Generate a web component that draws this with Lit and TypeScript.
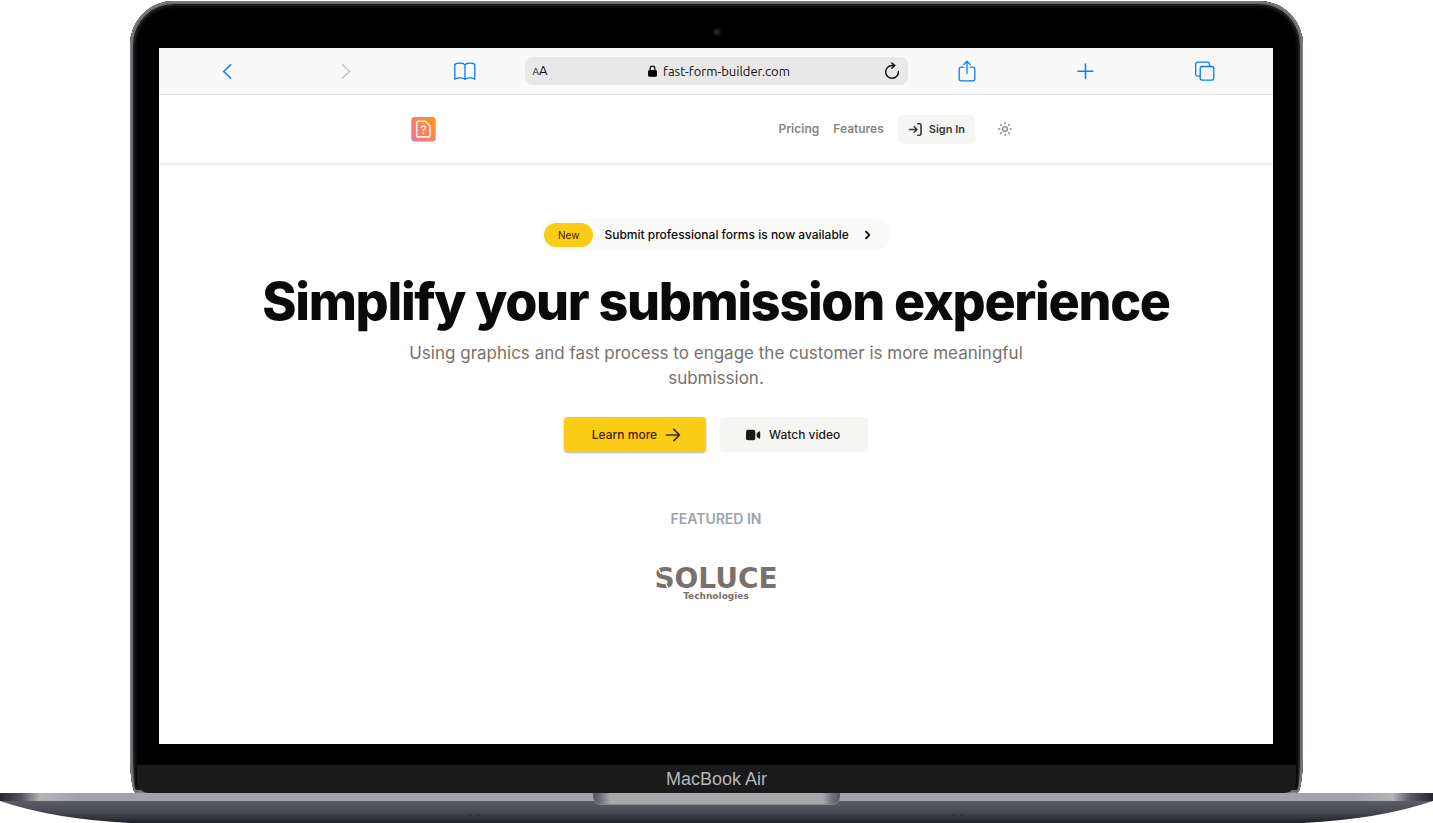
import { LitElement, html, css } from "lit";
import { customElement } from "lit/decorators.js";

@customElement("browser-toolbar")
class BrowserToolbar extends LitElement {
  static styles = css`
    :host {
      display: block;
      background: #f9f9f9;
      border-bottom: 1px solid #e2e2e2;
    }
    .bar {
      display: grid;
      grid-template-columns: repeat(3, 1fr) minmax(200px, 383px) repeat(3, 1fr);
      align-items: center;
      height: 46px;
      padding: 0 9px;
    }
    button {
      display: flex;
      padding: 0;
      border: 0;
      background: none;
      color: #087aff;
      justify-self: center;
    }
    button:disabled {
      color: #c5c5c5;
    }
    svg {
      display: block;
      fill: none;
      stroke: currentColor;
    }
    .address {
      display: flex;
      align-items: center;
      justify-content: space-between;
      height: 28px;
      padding: 0 7px 0 8px;
      border-radius: 8px;
      background: #e8e8e8;
      font: 13px/20px Ubuntu, "Noto Sans", sans-serif;
      color: #111;
    }
    .address button {
      color: #111;
      font: inherit;
      align-items: baseline;
    }
    .small {
      font-size: 10px;
    }
    .url {
      display: flex;
      align-items: center;
      gap: 6px;
      padding-left: 6px;
    }
    .url svg {
      fill: #000;
    }
  `;

  render() {
    return html`<div class="bar">
      <button aria-label="Back">
        <svg width="12" height="18" viewBox="0 0 12 18" stroke-width="1.5"><path d="M10.2 2.300 2.700 9.500l7.500 7" /></svg>
      </button>
      <button aria-label="Forward" disabled>
        <svg width="12" height="18" viewBox="0 0 12 18" stroke-width="1.5"><path d="m2 2.300 7.500 7.200-7.500 7" /></svg>
      </button>
      <button aria-label="Bookmarks">
        <svg width="22" height="18" viewBox="0 0 22 18" stroke-width="1.3" stroke-linejoin="round">
          <path d="M11 2.900C9.500.7 3.300.6.8 2.400v14.800c2.600-1.500 8.200-1.800 10.200.1 2-1.900 7.200-1.600 9.800-.1V2.400C18.300.6 12.500.7 11 2.900Zm0 0v14.300" />
        </svg>
      </button>
      <div class="address">
        <button aria-label="Text size"><span class="small">A</span>A</button>
        <span class="url">
          <svg width="9" height="12" viewBox="0 0 9 12">
            <rect x=".5" y="5.500" width="8" height="5.800" rx=".6" />
            <path d="M2.200 5.500V3.500a2.300 2.300 0 0 1 4.600 0v2" fill="none" stroke-width="1.300" />
          </svg>
          fast-form-builder.com
        </span>
        <button aria-label="Reload">
          <svg width="16" height="18" viewBox="0 0 16 18" stroke-width="1.400" stroke-linecap="round" stroke-linejoin="round">
            <path d="M14.400 9.500A6.400 6.400 0 1 1 8 3.500h2.500M7.800.9l3 2.700-3 2.700" />
          </svg>
        </button>
      </div>
      <button aria-label="Share">
        <svg width="18" height="22" viewBox="0 0 18 22" stroke-width="1.300" stroke-linecap="round" stroke-linejoin="round">
          <path d="M5.800 7.200H3.200Q1.200 7.200 1.200 9.200v9.600q0 2 2 2h11.600q2 0 2-2V9.200q0-2-2-2h-2.600M9 13.500V1.400M5.700 4.600 9 1.300l3.300 3.300" />
        </svg>
      </button>
      <button aria-label="New tab">
        <svg width="18" height="18" viewBox="0 0 18 18" stroke-width="1.500"><path d="M8.500 1.500v15.500M.5 9.300h16" /></svg>
      </button>
      <button aria-label="Tabs">
        <svg width="20" height="20" viewBox="0 0 20 20" stroke-width="1.300">
          <rect x="5.200" y="5.500" width="13.600" height="13.600" rx="2" />
          <path d="M5 15.200H2.800q-2.100 0-2.100-2.200V3.300Q.7 1.200 2.800 1.200h9.500q2.100 0 2.200 2.100v2" />
        </svg>
      </button>
    </div>`;
  }
}

@customElement("site-header")
class SiteHeader extends LitElement {
  static styles = css`
    :host {
      display: block;
      border-bottom: 1px solid #e7e6e5;
      box-shadow: 0 1px 2px rgb(0 0 0 / 8%);
    }
    .inner {
      display: flex;
      align-items: center;
      justify-content: space-between;
      max-width: 610px;
      height: 68px;
      margin: 0 auto;
      font: 500 12px/18px Inter, sans-serif;
    }
    svg {
      display: block;
      fill: none;
      stroke: currentColor;
      stroke-linecap: round;
      stroke-linejoin: round;
    }
    nav {
      display: flex;
      align-items: center;
      gap: 14px;
    }
    a {
      color: #8b8581;
      text-decoration: none;
      font-weight: 600;
    }
    button {
      display: flex;
      align-items: center;
      justify-content: center;
      border: 0;
      font: inherit;
      background: none;
    }
    .signin {
      gap: 6px;
      height: 28px;
      padding: 0 10px;
      border-radius: 5px;
      background: #f5f5f4;
      box-shadow: 0 1px 2px rgb(0 0 0 / 4%);
      color: #3b3735;
      font-size: 11px;
      font-weight: 600;
    }
    .theme {
      width: 32px;
      height: 28px;
      padding: 0;
      color: #8b8581;
    }
  `;

  render() {
    return html`<header class="inner">
      <a href="#" aria-label="Home">
        <svg width="25" height="25" viewBox="0 0 25 25">
          <defs>
            <linearGradient id="brand" x1="0" y1="1" x2="1" y2="0">
              <stop offset="0" stop-color="#f472a0" />
              <stop offset=".5" stop-color="#fb8060" />
              <stop offset="1" stop-color="#ff9a0a" />
            </linearGradient>
          </defs>
          <rect x=".3" y="0" width="24.400" height="24.400" rx="3" fill="url(#brand)" stroke="none" />
          <path d="M7.500 4.300h6.800l4.700 4.600v9q0 2-2 2H7.700q-2 0-2-2V6.100q0-1.800 1.800-1.800Z" stroke="#fff2df" stroke-width="1.600" />
          <path d="M10.300 10.500q.4-1.500 2.200-1.500 2 .1 2 1.700 0 1.500-2.100 2.200v.6M12.400 16.200v.1" stroke="#ffe6d0" stroke-width="1.700" />
        </svg>
      </a>
      <nav>
        <a href="#pricing">Pricing</a>
        <a href="#features">Features</a>
        <button class="signin">
          <svg width="15" height="15" viewBox="0 0 15 15" stroke-width="1.600">
            <path d="M1.500 7.500h7.500M6.200 4.700 9 7.500l-2.800 2.800M9.800 1.800h1.700q1.500 0 1.500 1.500v8.400q0 1.500-1.500 1.500H9.800" />
          </svg>
          Sign In
        </button>
        <button class="theme" aria-label="Toggle theme">
          <svg width="14" height="14" viewBox="0 0 14 14" stroke-width="1.400">
            <circle cx="7" cy="7" r="2.400" />
            <path d="M7 .8v1M7 12.200v1M.8 7h1M12.200 7h1M2.600 2.600l.7.7M10.700 10.700l.7.7M2.600 11.400l.7-.7M10.700 3.300l.7-.7" />
          </svg>
        </button>
      </nav>
    </header>`;
  }
}

@customElement("landing-hero")
class LandingHero extends LitElement {
  static styles = css`
    :host {
      display: block;
      font: 500 12px/18px Inter, sans-serif;
      color: #0c0a09;
    }
    .hero {
      display: flex;
      flex-direction: column;
      align-items: center;
      padding: 55px 16px 0;
      text-align: center;
    }
    svg {
      display: block;
    }
    .line {
      fill: none;
      stroke: currentColor;
      stroke-linecap: round;
      stroke-linejoin: round;
    }
    .news {
      display: flex;
      align-items: center;
      height: 32px;
      padding: 0 19px 0 3px;
      border-radius: 16px;
      background: #fafaf9;
      color: inherit;
      text-decoration: none;
    }
    .tag {
      padding: 3px 14px;
      border-radius: 12px;
      background: #facc15;
      color: #422006;
      font-size: 10px;
      font-weight: 400;
      margin-right: 11px;
    }
    .news svg {
      margin-left: 14px;
    }
    h1 {
      margin: 23px 0 0;
      font-size: 52px;
      line-height: 56px;
      font-weight: 800;
      letter-spacing: -0.025em;
    }
    .lead {
      max-width: 640px;
      margin: 11px 0 0;
      font-size: 17px;
      line-height: 25px;
      font-weight: 400;
      color: #78716c;
    }
    .actions {
      display: flex;
      gap: 14px;
      margin-top: 26px;
    }
    button {
      display: flex;
      align-items: center;
      gap: 8px;
      height: 35px;
      padding: 0 28px;
      border: 0;
      border-radius: 4px;
      font: inherit;
    }
    .primary {
      padding-right: 25px;
      background: #facc15;
      color: #422006;
      box-shadow: 0 1px 2px rgb(0 0 0 / 30%);
    }
    .secondary {
      padding-left: 25px;
      background: #f5f5f4;
      color: #1c1917;
    }
    h2 {
      margin: 57px 0 0;
      font-size: 14px;
      line-height: 20px;
      font-weight: 600;
      color: #9ca3af;
    }
    .partner {
      margin-top: 30px;
      fill: #78716c;
      font-family: "DejaVu Sans", sans-serif;
      font-weight: 700;
      text-anchor: middle;
    }
    .partner-name {
      font-size: 28px;
    }
    .partner-sub {
      font-size: 9px;
    }
    .cut {
      fill: none;
      stroke: #fff;
      stroke-width: 1.500;
    }
  `;

  render() {
    return html`<main class="hero">
      <a class="news" href="#news">
        <span class="tag">New</span>
        Submit professional forms is now available
        <svg class="line" width="9" height="10" viewBox="0 0 9 10" stroke-width="1.800"><path d="M3 1.700 6.300 5 3 8.300" /></svg>
      </a>
      <h1>Simplify your submission experience</h1>
      <p class="lead">Using graphics and fast process to engage the customer is more meaningful submission.</p>
      <div class="actions">
        <button class="primary">
          Learn more
          <svg class="line" width="16" height="14" viewBox="0 0 16 14" stroke-width="1.600"><path d="M1.500 7h13M8.900 1.400 14.500 7l-5.600 5.600" /></svg>
        </button>
        <button class="secondary">
          <svg width="16" height="12" viewBox="0 0 16 12" fill="currentColor">
            <rect x="1" y=".7" width="9.300" height="10.600" rx="2" />
            <path d="M11.700 4.300 14 2.500q1.200-.6 1.200.5v6q0 1.100-1.200.5l-2.300-1.800Z" />
          </svg>
          Watch video
        </button>
      </div>
      <h2>FEATURED IN</h2>
      <svg class="partner" width="136" height="48" viewBox="0 0 136 48">
        <text class="partner-name" x="68" y="29">SOLUCE</text>
        <text class="partner-sub" x="68" y="40">Technologies</text>
        <path class="cut" d="M9 7 13 15M16 21l5 10" />
      </svg>
    </main>`;
  }
}

@customElement("app-root")
class AppRoot extends LitElement {
  static styles = css`
    :host {
      display: flex;
      flex-direction: column;
      min-height: 100vh;
      background: #fff;
    }
    .lid {
      flex: 1;
      display: flex;
      flex-direction: column;
      margin: 1px 130px 0;
      padding: 0 7px;
      border-radius: 44px 44px 6px 6px / 44px 44px 40px 40px;
      background: #000;
      box-shadow:
        inset 0 0 0 1px #808186,
        inset 0 0 0 3px #6d6e73,
        inset 0 0 0 5px #1c1d1f,
        inset 0 0 3px 6px #141516;
    }
    .camera {
      display: flex;
      align-items: center;
      justify-content: center;
      height: 47px;
      padding-top: 14px;
      box-sizing: border-box;
    }
    .lens {
      width: 4px;
      height: 4px;
      border: 2px solid #151515;
      border-radius: 50%;
      background: #252a2d;
    }
    .screen {
      flex: 1;
      margin: 0 23px 0 22px;
      background: #fff;
    }
    .chin {
      height: 28px;
      margin-top: 21px;
      border-radius: 0 0 12px 12px;
      background: #1a1a1a;
      color: #b5b6ba;
      font: 18px/28px "Liberation Sans", Arial, sans-serif;
      text-align: center;
    }
    .base {
      position: relative;
      height: 30px;
    }
    .base svg {
      display: block;
      width: 100%;
      height: 30px;
    }
    .notch {
      position: absolute;
      top: 0;
      left: 0;
      right: 0;
      width: 247px;
      height: 12px;
      margin: 0 auto;
      border-radius: 0 0 8px 8px;
      background: linear-gradient(90deg, #55565a, #707176 3%, #a7a8ac 7%, #a7a8ac 93%, #707176 97%, #55565a);
      box-shadow: inset 0 -1px 1px #85868c;
    }
  `;

  render() {
    return html`
      <div class="lid">
        <div class="camera"><span class="lens"></span></div>
        <div class="screen">
          <browser-toolbar></browser-toolbar>
          <site-header></site-header>
          <landing-hero></landing-hero>
        </div>
        <div class="chin">MacBook Air</div>
      </div>
      <div class="base">
        <svg viewBox="0 0 1433 30" preserveAspectRatio="none" aria-hidden="true">
          <defs>
            <linearGradient id="rim">
              <stop offset="0" stop-color="#25262f" />
              <stop offset=".015" stop-color="#55565c" />
              <stop offset=".028" stop-color="#b2b3b7" />
              <stop offset=".055" stop-color="#a2a3a8" />
              <stop offset=".945" stop-color="#a2a3a8" />
              <stop offset=".972" stop-color="#b2b3b7" />
              <stop offset=".985" stop-color="#55565c" />
              <stop offset="1" stop-color="#25262f" />
            </linearGradient>
            <linearGradient id="under" x2="0" y2="1">
              <stop offset="0" stop-color="#5d5e65" />
              <stop offset=".55" stop-color="#454750" />
              <stop offset="1" stop-color="#1d1f2b" />
            </linearGradient>
          </defs>
          <path d="M0 8H1433Q1380 26 1303 30H130Q53 26 0 8Z" fill="url(#under)" />
          <path d="M0 0H1433V8H0Z" fill="url(#rim)" />
          <path d="M468 22h4m4 0h4M952 22h4m4 0h4" stroke="#2f3038" stroke-width="1" />
        </svg>
        <div class="notch"></div>
      </div>
    `;
  }
}
